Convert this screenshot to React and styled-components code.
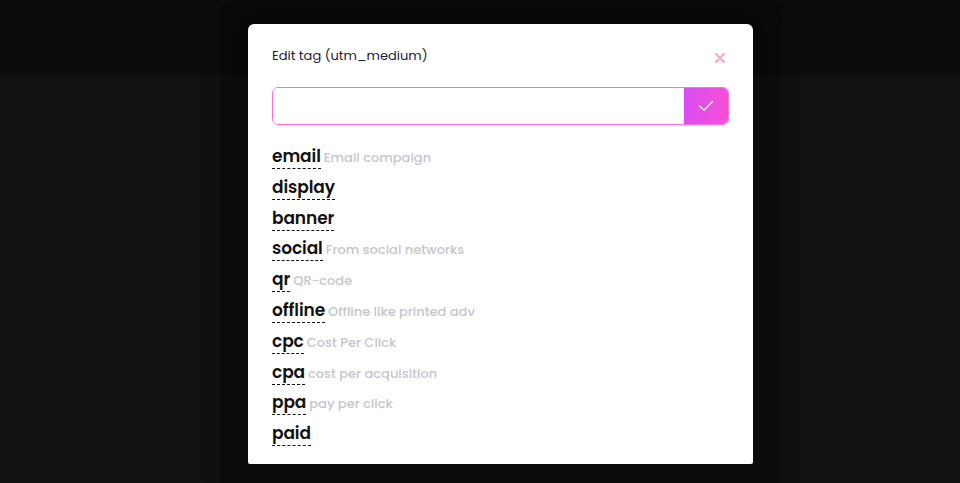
import styled, { createGlobalStyle } from "styled-components";

const GlobalStyle = createGlobalStyle`
  html, body {
    margin: 0;
    padding: 0;
    background: #111111;
    font-family: Poppins, Inter, "Noto Sans", sans-serif;
  }
`;

const Page = styled.div`
  position: relative;
  width: 960px;
  height: 483px;
  overflow: hidden;
  background: #111111;
`;

const Header = styled.div`
  height: 75px;
  background: #0c0c0c;
`;

const Overlay = styled.div`
  position: absolute;
  inset: 0;
  display: flex;
  justify-content: center;
  padding: 24px 0 0 41px;
`;

const Modal = styled.div`
  width: 505px;
  height: 440px;
  box-sizing: border-box;
  padding: 22px 24px 0 24px;
  background: #ffffff;
  border-radius: 6px 6px 2px 2px;
  box-shadow: 0 0 0 28px rgba(4, 4, 8, 0.3), 0 0 30px 20px rgba(0, 0, 0, 0.12);
`;

const TitleRow = styled.div`
  display: flex;
  align-items: flex-start;
  justify-content: space-between;
`;

const Title = styled.h2`
  margin: 0;
  font-size: 13px;
  font-weight: 400;
  color: #1d2033;
  line-height: 20px;
`;

const Close = styled.button`
  border: none;
  background: none;
  padding: 0;
  margin: 7px 4px 0 0;
  display: flex;
  cursor: pointer;
`;

const InputBox = styled.form`
  display: flex;
  margin-top: 21px;
  height: 38px;
  box-sizing: border-box;
  border: 1.5px solid #ff6ee0;
  border-radius: 6px;
  overflow: hidden;
`;

const Input = styled.input`
  flex: 1;
  border: none;
  padding: 0 12px;
  font-size: 14px;
  font-family: inherit;
  &:focus {
    outline: none;
  }
`;

const Submit = styled.button`
  width: 44px;
  border: none;
  display: flex;
  align-items: center;
  justify-content: center;
  background: linear-gradient(90deg, #d84df2, #f64fd7);
  cursor: pointer;
`;

const List = styled.ul`
  list-style: none;
  margin: 20px 0 0 0;
  padding: 0;
  display: flex;
  flex-direction: column;
  gap: 6.8px;
`;

const Item = styled.li`
  display: flex;
  align-items: baseline;
  gap: 3px;
  height: 24px;
`;

const Tag = styled.span`
  font-size: 17px;
  font-weight: 600;
  color: #111111;
  line-height: 22px;
  border-bottom: 1px dashed #111111;
  padding-bottom: 1px;
  letter-spacing: -0.1px;
`;

const Desc = styled.span`
  font-size: 13px;
  font-weight: 500;
  color: #c6c6cb;
`;

const tags = [
  ["email", "Email compaign"],
  ["display", ""],
  ["banner", ""],
  ["social", "From social networks"],
  ["qr", "QR-code"],
  ["offline", "Offline like printed adv"],
  ["cpc", "Cost Per Click"],
  ["cpa", "cost per acquisition"],
  ["ppa", "pay per click"],
  ["paid", ""]
];

const App = () => {
  return (
    <Page>
      <GlobalStyle />
      <Header />
      <Overlay>
        <Modal>
          <TitleRow>
            <Title>Edit tag (utm_medium)</Title>
            <Close type="button">
              <svg width="10" height="10" viewBox="0 0 10 10">
                <path
                  d="M1 1L9 9M9 1L1 9"
                  stroke="#f7a6c8"
                  strokeWidth="2.2"
                  strokeLinecap="round"
                />
              </svg>
            </Close>
          </TitleRow>
          <InputBox onSubmit={(e) => e.preventDefault()}>
            <Input />
            <Submit type="submit">
              <svg width="16" height="12" viewBox="0 0 16 12">
                <path
                  d="M1.5 6L6 10.2L14.5 1.5"
                  fill="none"
                  stroke="#ffffff"
                  strokeWidth="1.4"
                  strokeLinecap="round"
                  strokeLinejoin="round"
                />
              </svg>
            </Submit>
          </InputBox>
          <List>
            {tags.map(([tag, desc]) => (
              <Item key={tag}>
                <Tag>{tag}</Tag>
                {desc && <Desc>{desc}</Desc>}
              </Item>
            ))}
          </List>
        </Modal>
      </Overlay>
    </Page>
  );
};

export default App;
